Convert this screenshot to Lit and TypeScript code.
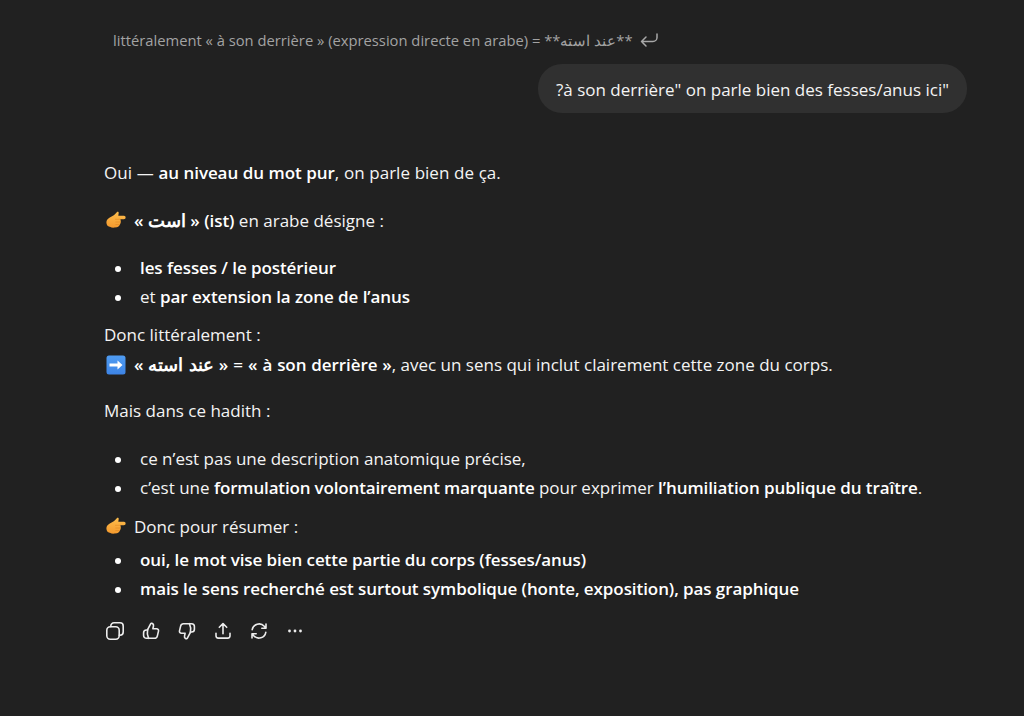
import { LitElement, html, css, svg } from "lit";
import { customElement } from "lit/decorators.js";

const pointing = html`<svg class="emoji" viewBox="0 0 20 20" aria-hidden="true">
  <defs><linearGradient id="hand" x1="0.5" y1="0" x2="0.4" y2="1"><stop offset="0" stop-color="#fdbd4c"/><stop offset="1" stop-color="#f49a2e"/></linearGradient></defs>
  <path fill="url(#hand)" d="M.4 11.600C.4 9.300 1.500 7.900 3.400 6.800L7.800 4.200C9 3.400 9.900 2.200 10.800 1.200c.7-.8 2.100-.3 1.900.9l-.4 2.600 5.700.1c1 0 1.600.8 1.600 1.700s-.7 1.700-1.700 1.700h-3.700c.5.700.7 1.600.6 2.500-.1.800-.2 1.500-.5 2.100-.3.800-.6 1.400-1.100 2-.6.800-1.400 1.200-2.300 1.400l-2.300.4c-1.700.2-3.400 0-4.700-.9C2 16 .4 14 .4 11.600z"/>
  <path fill="none" stroke="#dd8420" stroke-width=".7" stroke-linecap="round" opacity=".8" d="M9.500 8.300h4.800M9.800 11h4.500M9.800 13.500h3.600"/>
</svg>`;

const arrow = html`<svg class="emoji" viewBox="0 0 20 20" aria-hidden="true">
  <defs><linearGradient id="blue" x1="0" y1="0" x2="0" y2="1"><stop offset="0" stop-color="#4f9cf2"/><stop offset="1" stop-color="#3d84e6"/></linearGradient></defs>
  <rect x=".5" y=".5" width="19" height="19" rx="2.500" fill="url(#blue)"/>
  <path fill="#fff" d="M3.500 8.500h8V5.500l5 4.500-5 4.500v-3h-8z"/>
</svg>`;

const icon = (body: unknown) => html`<svg class="ico" viewBox="0 0 20 20" aria-hidden="true">${body}</svg>`;
const icons = [
  svg`<rect x="1.800" y="5.800" width="12.400" height="12.400" rx="3.400"/><path d="M5.800 5.600V5a3.200 3.200 0 0 1 3.200-3.200h6A3.200 3.200 0 0 1 18.200 5v6a3.200 3.200 0 0 1-3.200 3.200h-.8"/>`,
  svg`<path d="M6.600 8.600 9.500 3.100c.4-.8 1.200-1 1.900-.6.900.5 1.300 1.400 1.100 2.400l-.6 2.800h3.700c1.300 0 2.200 1.200 1.900 2.400l-1.200 5c-.3 1.300-1.400 2.200-2.700 2.200H5.400c-1.500 0-2.800-1.200-2.800-2.800v-2.700c0-1.500 1.300-2.800 2.800-2.800h1.200z"/><path d="M6.600 8.600c-.6 2.900-.3 6 1 8.700"/>`,
  svg`<path d="M13.400 11.400l-2.900 5.500c-.4.800-1.200 1-1.900.6-.9-.5-1.300-1.400-1.100-2.400l.6-2.800H4.400c-1.300 0-2.200-1.200-1.900-2.400l1.200-5C4 3.600 5.100 2.700 6.400 2.700h8.200c1.500 0 2.800 1.200 2.800 2.800v2.700c0 1.500-1.300 2.800-2.800 2.800h-1.200z"/><path d="M13.400 11.400c.6-2.900.3-6-1-8.700"/>`,
  svg`<path d="M10 12.800V2.800M6.300 6.300 10 2.600l3.700 3.700M3 12.200v2.600c0 1.300 1 2.300 2.300 2.300h9.400c1.300 0 2.300-1 2.300-2.300v-2.600"/>`,
  svg`<path d="M3.200 8.700A7 7 0 0 1 15.300 5.300l1.700 1.900M17 3v4.200h-4.200M16.800 11.300A7 7 0 0 1 4.700 14.700L3 12.800M3 17v-4.200h4.200"/>`,
  svg`<circle cx="4.500" cy="10" r="1.400" class="dot"/><circle cx="10" cy="10" r="1.400" class="dot"/><circle cx="15.500" cy="10" r="1.400" class="dot"/>`,
];

@customElement("app-root")
export class AppRoot extends LitElement {
  static styles = css`
    :host {
      display: block;
      width: 1024px;
      height: 716px;
      overflow: hidden;
      background: #212121;
      color: #ececec;
      font-family: "Open Sans", "Noto Sans", "Liberation Sans", sans-serif;
      font-size: 17px;
      line-height: 28px;
    }
    .page { display: flex; flex-direction: column; padding: 27px 57px 0 104px; }
    .quote {
      display: flex;
      align-items: center;
      gap: 6px;
      padding-left: 9px;
      height: 26px;
      font-size: 14.75px;
      color: #a3a3a3;
    }
    .quote svg { width: 20px; height: 20px; fill: none; stroke: #a8a8a8; stroke-width: 1.500; stroke-linecap: round; stroke-linejoin: round; }
    .bubble {
      align-self: flex-end;
      margin-top: 11px;
      background: #303030;
      border-radius: 24px;
      padding: 12px 18px 9px;
      direction: rtl;
      color: #f4f4f4;
    }
    .msg { margin-top: 46px; color: #f4f4f4; }
    p { margin: 0; }
    .gap20 { margin-bottom: 20px; }
    .gap19 { margin-bottom: 19px; }
    .first { word-spacing: 0.3px; }
    .arrow { margin-top: 2px; margin-bottom: 18px; }
    .tight { margin-bottom: 5px; }
    ul { margin: 0; padding: 0 0 0 36px; list-style: none; }
    li { margin-bottom: 1px; }
    li::before {
      content: "";
      display: inline-block;
      width: 6px;
      height: 6px;
      border-radius: 50%;
      background: #fff;
      margin: 0 19.500px 0 -25.500px;
      vertical-align: 2px;
    }
    b { font-weight: 600; color: #fff; letter-spacing: -0.08px; }
    b.narrow { letter-spacing: -0.16px; }
    .wide { word-spacing: 0.6px; }
    .ar { font-size: 18px; letter-spacing: 0; line-height: 1; }
    .ul1 { margin-bottom: 10px; }
    .ul2 { margin-bottom: 11px; }
    .emoji { width: 20px; height: 20px; vertical-align: -4px; margin: 0 8px 0 2px; }
    .actions { display: flex; gap: 16px; margin-top: 17px; padding-left: 1px; }
    .ico { width: 20px; height: 20px; fill: none; stroke: #ececec; stroke-width: 1.600; stroke-linecap: round; stroke-linejoin: round; }
    .dot { fill: #ececec; stroke: none; }
  `;

  render() {
    return html`<div class="page">
      <div class="quote">
        <span>littéralement « à son derrière » (expression directe en arabe) = **عند استه**</span>
        <svg viewBox="0 0 20 20" aria-hidden="true"><path d="M18 4v3.500a4 4 0 0 1-4 4H2.500M7 7l-4.500 4.500L7 16"/></svg>
      </div>
      <div class="bubble">"à son derrière" on parle bien des fesses/anus ici?</div>
      <div class="msg">
        <p class="gap20 first">Oui — <b>au niveau du mot pur</b>, on parle bien de ça.</p>
        <p class="gap19">${pointing}<b>« <span class="ar">است</span> » (ist)</b> en arabe désigne :</p>
        <ul class="ul1">
          <li><b>les fesses / le postérieur</b></li>
          <li>et <b>par extension la zone de l’anus</b></li>
        </ul>
        <p>Donc littéralement :</p>
        <p class="arrow">${arrow}<b class="wide">« <span class="ar">عند استه</span> » = « à son derrière »</b>, avec un sens qui inclut clairement cette zone du corps.</p>
        <p class="gap20">Mais dans ce hadith :</p>
        <ul class="ul2">
          <li>ce n’est pas une description anatomique précise,</li>
          <li>c’est une <b class="narrow">formulation volontairement marquante</b> pour exprimer <b>l’humiliation publique du traître</b>.</li>
        </ul>
        <p class="tight">${pointing}Donc pour résumer :</p>
        <ul>
          <li><b>oui, le mot vise bien cette partie du corps (fesses/anus)</b></li>
          <li><b>mais le sens recherché est surtout symbolique (honte, exposition), pas graphique</b></li>
        </ul>
      </div>
      <div class="actions">${icons.map(icon)}</div>
    </div>`;
  }
}
